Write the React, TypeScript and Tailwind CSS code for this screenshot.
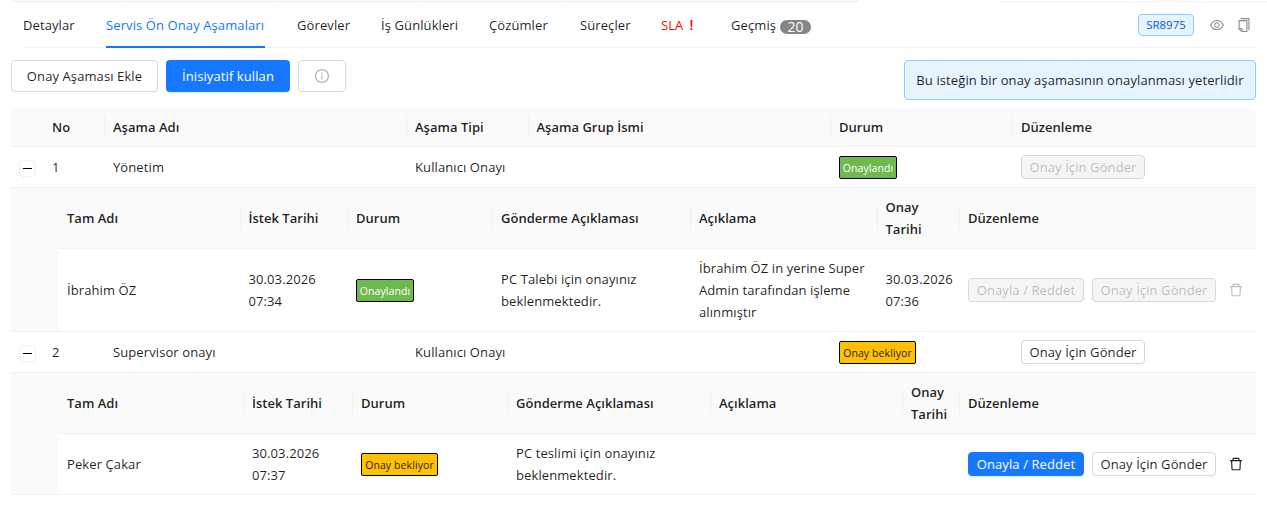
import type { ReactNode } from "react";
import { AiOutlineCopy, AiOutlineDelete, AiOutlineEye, AiOutlineInfoCircle } from "react-icons/ai";

const tabs = [
  { label: "Detaylar", width: "w-[51px]" },
  { label: "Servis Ön Onay Aşamaları", width: "w-[159px]", active: true },
  { label: "Görevler", width: "w-[52px]" },
  { label: "İş Günlükleri", width: "w-[76px]" },
  { label: "Çözümler", width: "w-[59px]" },
  { label: "Süreçler", width: "w-[49px]" },
  { label: "SLA", width: "w-[38px]", danger: true },
  { label: "Geçmiş", width: "w-[80px]", count: 20 },
];

const stageColumns = "grid-cols-[33px_61px_302px_121.5px_302.5px_182px_1fr]";
const firstStepColumns = "grid-cols-[181.5px_107.5px_145px_198px_186.5px_82.5px_1fr]";
const secondStepColumns = "grid-cols-[185px_109px_155px_203px_192px_57px_1fr]";

function HeadCell({ children, divider = true }: { children?: ReactNode; divider?: boolean }) {
  return (
    <div className="flex h-full items-center">
      <div className="min-w-0 flex-1 pl-2 font-semibold tracking-[0.02px]">{children}</div>
      {divider && <div className="h-[22px] w-px bg-[#f0f0f0]" />}
    </div>
  );
}

function Cell({ children }: { children?: ReactNode }) {
  return <div className="min-w-0 pl-2">{children}</div>;
}

function Status({ approved }: { approved?: boolean }) {
  return approved ? (
    <span className="mt-px flex h-[23px] w-[58px] items-center justify-center rounded-[2px] border border-black bg-[#70b94f] text-[10.5px] whitespace-nowrap text-white">
      Onaylandı
    </span>
  ) : (
    <span className="mt-px flex h-[23px] w-[77px] items-center justify-center rounded-[2px] border border-black bg-[#ffc107] text-[10.5px] whitespace-nowrap text-black/88">
      Onay bekliyor
    </span>
  );
}

function SmallButton({ children, kind = "plain", width }: { children: ReactNode; kind?: "plain" | "primary" | "disabled"; width: string }) {
  const look = {
    plain: "border-[#d9d9d9] bg-white text-black/88 shadow-[0_2px_0_rgba(0,0,0,0.02)]",
    primary: "border-[#1677ff] bg-[#1677ff] text-white shadow-[0_2px_0_rgba(5,145,255,0.1)]",
    disabled: "border-[#d9d9d9] bg-[#f5f5f5] text-black/25",
  }[kind];
  return (
    <button className={`flex h-6 shrink-0 items-center justify-center rounded-[4px] border whitespace-nowrap ${width} ${look}`}>
      {children}
    </button>
  );
}

function StageHeader() {
  return (
    <div className={`grid h-[39px] items-center rounded-t-lg border-b border-[#f0f0f0] bg-[#fafafa] ${stageColumns}`}>
      <HeadCell divider={false} />
      <HeadCell>No</HeadCell>
      <HeadCell>Aşama Adı</HeadCell>
      <HeadCell>Aşama Tipi</HeadCell>
      <HeadCell>Aşama Grup İsmi</HeadCell>
      <HeadCell>Durum</HeadCell>
      <HeadCell divider={false}>Düzenleme</HeadCell>
    </div>
  );
}

function StageRow({ no, name, approved }: { no: number; name: string; approved?: boolean }) {
  return (
    <div className={`grid h-[41px] items-center border-b border-[#f0f0f0] ${stageColumns}`}>
      <Cell>
        <button aria-label="Daralt" className="mt-[2px] flex h-[17px] w-[17px] items-center justify-center rounded-[4px] border border-[#f0f0f0] bg-white">
          <span className="h-px w-[9px] bg-black" />
        </button>
      </Cell>
      <Cell>{no}</Cell>
      <Cell>{name}</Cell>
      <Cell>Kullanıcı Onayı</Cell>
      <Cell />
      <Cell>
        <Status approved={approved} />
      </Cell>
      <Cell>
        <SmallButton width="w-[124px]" kind={approved ? "disabled" : "plain"}>Onay İçin Gönder</SmallButton>
      </Cell>
    </div>
  );
}

interface Step {
  person: string;
  requested: [string, string];
  sent: string[];
  note: string[];
  answered: string[];
  approved?: boolean;
}

function Lines({ lines }: { lines: string[] }) {
  return (
    <>
      {lines.map((line) => (
        <div key={line} className="whitespace-nowrap">{line}</div>
      ))}
    </>
  );
}

function Steps({ step, columns, height }: { step: Step; columns: string; height: string }) {
  return (
    <div className="border-b border-[#f0f0f0] bg-[#fafafa] pl-12">
      <div className={`grid h-[61px] items-center border-b border-[#f0f0f0] ${columns}`}>
        <HeadCell>Tam Adı</HeadCell>
        <HeadCell>İstek Tarihi</HeadCell>
        <HeadCell>Durum</HeadCell>
        <HeadCell>Gönderme Açıklaması</HeadCell>
        <HeadCell>Açıklama</HeadCell>
        <HeadCell>
          Onay
          <br />
          Tarihi
        </HeadCell>
        <HeadCell divider={false}>Düzenleme</HeadCell>
      </div>
      <div className={`grid items-center bg-white ${height} ${columns}`}>
        <Cell>{step.person}</Cell>
        <Cell><Lines lines={step.requested} /></Cell>
        <Cell><Status approved={step.approved} /></Cell>
        <Cell><Lines lines={step.sent} /></Cell>
        <Cell><Lines lines={step.note} /></Cell>
        <Cell><Lines lines={step.answered} /></Cell>
        <Cell>
          <div className="flex items-center gap-2">
            <SmallButton width="w-[116px]" kind={step.approved ? "disabled" : "primary"}>Onayla / Reddet</SmallButton>
            <SmallButton width="w-[124px]" kind={step.approved ? "disabled" : "plain"}>Onay İçin Gönder</SmallButton>
            <AiOutlineDelete className={`ml-1 size-4 ${step.approved ? "text-black/25" : "text-black/88"}`} />
          </div>
        </Cell>
      </div>
    </div>
  );
}

export default function App() {
  return (
    <div className="h-[521px] w-[1267px] overflow-hidden bg-white font-['Open_Sans','Noto_Sans',sans-serif] text-[13px] leading-[22px] tracking-[0.1px] text-black/88">
      <div className="flex h-[2px] pl-[11px]">
        <div className="flex border-b border-[#f0f0f0]">
          <div className="w-[112px] border-r border-[#f0f0f0] bg-[#fafafa]" />
          {[0, 1, 2, 3, 4].map((n) => (
            <div key={n} className="ml-[2px] w-[145px] border-x border-[#f0f0f0] bg-[#fafafa]" />
          ))}
        </div>
        <div className="ml-[143px] flex-1 border-b border-[#f0f0f0]" />
      </div>

      <div className="mr-[11px] ml-[23px] flex h-[46px] items-center border-b border-[#f0f0f0]">
        <nav className="flex h-full gap-8">
          {tabs.map((tab) => (
            <div
              key={tab.label}
              className={`flex h-[46px] items-center border-b-2 pt-[2px] whitespace-nowrap ${tab.width} ${
                tab.active ? "border-[#1677ff] text-[#1677ff]" : "border-transparent"
              } ${tab.danger ? "text-[#ff0000]" : ""}`}
            >
              {tab.label}
              {tab.danger && <span className="ml-[6px] text-sm font-semibold">!</span>}
              {tab.count && (
                <span className="mt-[3px] ml-auto flex h-[14px] w-[31px] items-center justify-center rounded-full bg-[#868686] text-sm text-white">
                  {tab.count}
                </span>
              )}
            </div>
          ))}
        </nav>
        <div className="ml-auto flex items-center">
          <span className="flex h-[22px] w-[56px] items-center justify-center rounded-[4px] border border-[#91caff] bg-[#e6f4ff] text-[11.5px] tracking-normal text-[#0958d9]">
            SR8975
          </span>
          <AiOutlineEye className="ml-[15px] size-4 text-[#8c8c8c]" />
          <AiOutlineCopy className="mr-[4px] ml-[11px] size-4 text-[#8c8c8c]" />
        </div>
      </div>

      <main className="mr-[11px] ml-[11px] pt-3">
        <div className="flex h-12 items-start gap-2">
          <button className="h-8 w-[147px] rounded-[4px] border border-[#d9d9d9] shadow-[0_2px_0_rgba(0,0,0,0.02)]">Onay Aşaması Ekle</button>
          <button className="h-8 w-[124px] rounded-[4px] bg-[#1677ff] text-white shadow-[0_2px_0_rgba(5,145,255,0.1)]">İnisiyatif kullan</button>
          <button aria-label="Bilgi" className="flex h-8 w-[48px] items-center justify-center rounded-[4px] border border-[#d9d9d9] text-[#b0b0b0]">
            <AiOutlineInfoCircle className="size-4" />
          </button>
          <div className="ml-auto flex h-10 w-[352px] items-center justify-center rounded-[4px] border border-[#91caff] bg-[#e6f4ff]">
            Bu isteğin bir onay aşamasının onaylanması yeterlidir
          </div>
        </div>

        <StageHeader />
        <StageRow no={1} name="Yönetim" approved />
        <Steps
          columns={firstStepColumns}
          height="h-[82px]"
          step={{
            person: "İbrahim ÖZ",
            requested: ["30.03.2026", "07:34"],
            sent: ["PC Talebi için onayınız", "beklenmektedir."],
            note: ["İbrahim ÖZ in yerine Super", "Admin tarafından işleme", "alınmıştır"],
            answered: ["30.03.2026", "07:36"],
            approved: true,
          }}
        />
        <StageRow no={2} name="Supervisor onayı" />
        <Steps
          columns={secondStepColumns}
          height="h-[60px]"
          step={{
            person: "Peker Çakar",
            requested: ["30.03.2026", "07:37"],
            sent: ["PC teslimi için onayınız", "beklenmektedir."],
            note: [],
            answered: [],
          }}
        />
      </main>
    </div>
  );
}
